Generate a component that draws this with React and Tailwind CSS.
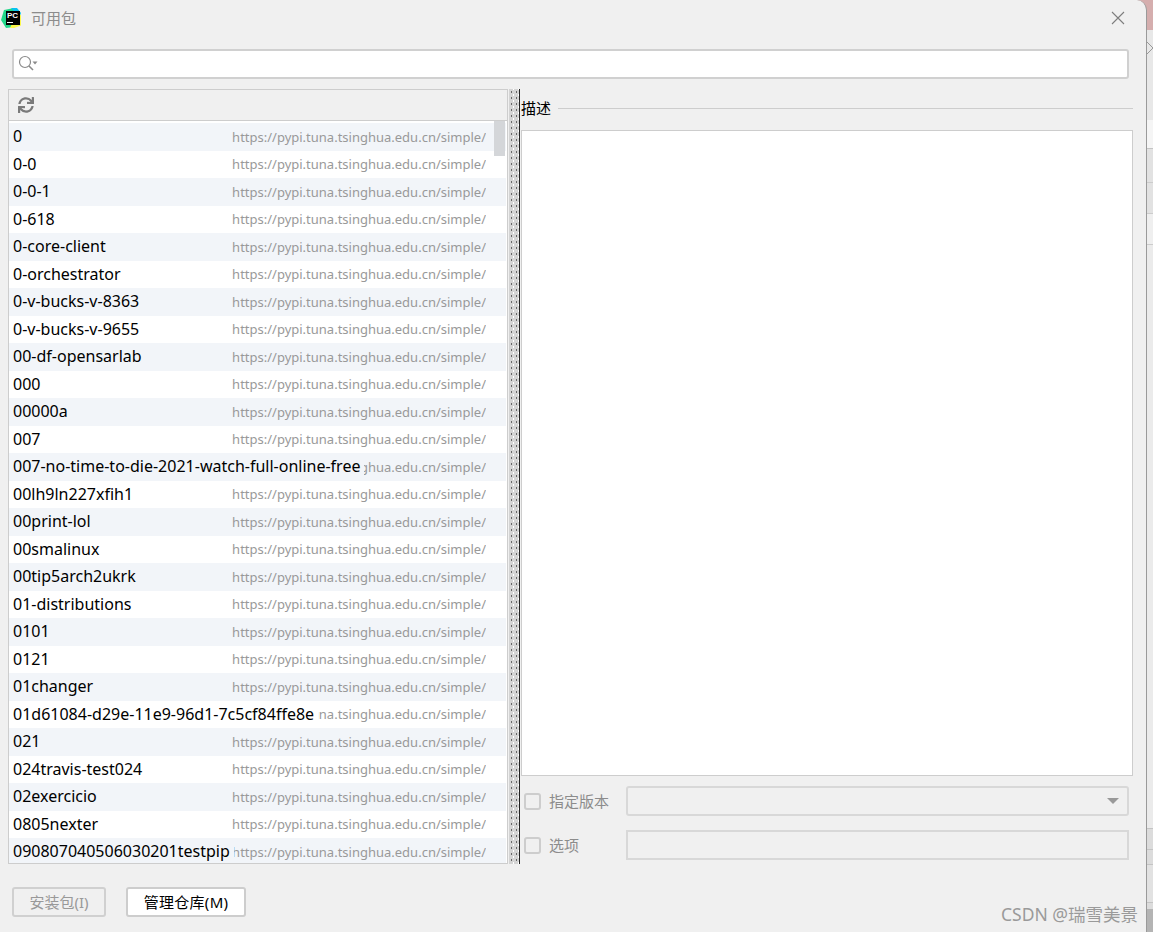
import { FaSync } from 'react-icons/fa';

const packages = [
  '0', '0-0', '0-0-1', '0-618', '0-core-client', '0-orchestrator', '0-v-bucks-v-8363', '0-v-bucks-v-9655',
  '00-df-opensarlab', '000', '00000a', '007', '007-no-time-to-die-2021-watch-full-online-free', '00lh9ln227xfih1',
  '00print-lol', '00smalinux', '00tip5arch2ukrk', '01-distributions', '0101', '0121', '01changer',
  '01d61084-d29e-11e9-96d1-7c5cf84ffe8e', '021', '024travis-test024', '02exercicio', '0805nexter',
  '090807040506030201testpip',
];

const REPO = 'https://pypi.tuna.tsinghua.edu.cn/simple/';

function PyCharmLogo() {
  return (
    <div className="relative w-5 h-5 shrink-0">
      <svg width="20" height="20" viewBox="0 0 20 20">
        <polygon points="3,2 13,0 19,4 20,15 14,19 5,20 0,12" fill="#21d789" />
        <polygon points="10,0 16,0 20,5 18,9" fill="#07c3f2" />
        <polygon points="14,9 20,7 21,17 13,20 9,20" fill="#fcf84a" />
        <rect x="5" y="3" width="14" height="14" fill="#000" />
        <rect x="6" y="14" width="6" height="1" fill="#fff" />
      </svg>
      <span className="absolute left-[6px] top-[3px] text-[8px] leading-[10px] font-bold text-white font-['Liberation_Sans',sans-serif]">PC</span>
    </div>
  );
}

function Row({ name, index }) {
  const stripe = index % 2 === 0 ? 'bg-[#f2f5f9]' : 'bg-white';
  return (
    <div className={`flex items-center h-[27.5px] pl-[4px] pr-[20px] mr-[1px] ${stripe}`}>
      <span className={`shrink-0 pr-[4px] text-[16px] leading-[24px] -mt-[1px] text-black ${stripe}`}>{name}</span>
      <div className="flex-1 min-w-0 mt-[1px] flex justify-end overflow-hidden">
        <span className="shrink-0 text-[13px] text-[#999999]">{REPO}</span>
      </div>
    </div>
  );
}

function Splitter() {
  return (
    <div className="w-[11px] shrink-0 ml-[1px] mr-[1px] border-r border-[#222222] bg-[#d4d4d4] bg-[radial-gradient(circle,#666666_0.7px,transparent_1px),radial-gradient(circle,#ffffff_0.7px,transparent_1px)] bg-[length:5px_6px,5px_6px] bg-[position:0_0,2px_3px]" />
  );
}

// sliver of the window behind the dialog
function BackgroundWindow() {
  return (
    <div className="flex-1 flex flex-col">
      <div className="h-[30px] bg-[#d5aeae]" />
      <div className="relative h-[90px] bg-[#e8e8e8]">
        <svg className="absolute left-[0px] top-[11px]" width="6" height="14" viewBox="0 0 6 14" fill="none" stroke="#999999">
          <path d="M0 1 L6 7 L0 13" />
        </svg>
      </div>
      <div className="h-[29px] bg-[#f5f5f5] border-b border-[#c4c4c4]" />
      <div className="h-[34px] bg-[#e2e2e2] border-b border-[#cccccc]" />
      <div className="h-[31px] bg-[#e2e2e2] border-b border-[#cccccc]" />
      <div className="h-[31px] bg-[#efefef] border-b border-[#cccccc]" />
      <div className="h-[584px] bg-[#ebebeb] border-b border-[#c4c4c4]" />
      <div className="h-[21px] bg-[#dcdcdc] border-b border-[#c4c4c4]" />
      <div className="h-[15px] bg-[#dcdcdc] border-b border-[#c4c4c4]" />
      <div className="h-[38px] bg-[#e2e2e2] border-b border-[#c4c4c4]" />
      <div className="h-[6px] bg-[#dcdcdc]" />
      <div className="flex-1 bg-[#b4b4b4]" />
    </div>
  );
}

export default function App() {
  return (
    <div className="w-[1153px] h-[932px] overflow-hidden flex bg-[#d5aeae] font-['Noto_Sans','Noto_Sans_CJK_SC',sans-serif]">
      <div className="w-[1147px] h-full shrink-0 flex flex-col bg-[#f0f0f0] rounded-tr-[10px] border-r border-[#9a9a9a]">
        <div className="h-[36px] shrink-0 flex items-center pl-[1px] pr-[20px]">
          <PyCharmLogo />
          <span className="ml-[10px] text-[15px] text-[#8c8c8c]">可用包</span>
          <svg className="ml-auto" width="16" height="16" viewBox="0 0 16 16" fill="none" stroke="#7d7d7d" strokeWidth="1.1">
            <path d="M2 2 L14 14 M14 2 L2 14" />
          </svg>
        </div>

        <div className="h-[30px] mt-[13px] ml-[12px] mr-[17px] flex items-center pl-[4px] bg-white rounded-[3px] border-2 border-[#d0d0d0] shrink-0">
          <svg width="20" height="18" viewBox="0 0 20 18" fill="none" stroke="#8a8a8a" strokeWidth="1.2">
            <circle cx="7" cy="7" r="5.5" />
            <path d="M11 11 L15 15" strokeWidth="1.6" />
            <path d="M14.5 6.5 h5 l-2.5 3 z" fill="#8a8a8a" stroke="none" />
          </svg>
        </div>

        <div className="flex-1 min-h-0 flex mt-[10px] ml-[8px] mr-[13px]">
          <div className="relative w-[500px] shrink-0 flex flex-col border border-[#cdcdcd] overflow-hidden">
            <div className="h-[31px] shrink-0 flex items-center pl-[9px] border-b border-[#cdcdcd]">
              <FaSync size={16} color="#7a7a7a" />
            </div>
            <div className="flex-1 min-h-0 bg-white pt-[2px] overflow-hidden">
              {packages.map((name, index) => (
                <Row key={name} name={name} index={index} />
              ))}
            </div>
            <div className="absolute right-[2px] top-[31px] w-[11px] h-[35px] bg-[#d4d6d9]" />
          </div>

          <Splitter />

          <div className="flex-1 min-w-0 flex flex-col">
            <div className="h-[41px] shrink-0 flex items-center pb-[3px]">
              <span className="text-[15px] text-black">描述</span>
              <div className="flex-1 h-px ml-[7px] bg-[#cdcdcd]" />
            </div>
            <div className="h-[646px] shrink-0 bg-white border border-[#cdcdcd]" />
            <div className="flex items-center h-[30px] mt-[10px] pl-[3px] pr-[4px]">
              <div className="w-[17px] h-[17px] rounded-[3px] border-2 border-[#cdcdcd]" />
              <span className="w-[77px] ml-[8px] text-[15px] text-[#8c8c8c]">指定版本</span>
              <div className="flex-1 h-[30px] flex items-center justify-end pr-[8px] rounded-[3px] border-2 border-[#d8d8d8]">
                <div className="w-0 h-0 border-x-[6px] border-x-transparent border-t-[6px] border-t-[#999999]" />
              </div>
            </div>
            <div className="flex items-center h-[30px] mt-[14px] pl-[3px] pr-[4px]">
              <div className="w-[17px] h-[17px] rounded-[3px] border-2 border-[#cdcdcd]" />
              <span className="w-[77px] ml-[8px] text-[15px] text-[#8c8c8c]">选项</span>
              <div className="flex-1 h-[30px] border-2 border-[#d8d8d8]" />
            </div>
          </div>
        </div>

        <div className="h-[68px] shrink-0 flex items-start relative pt-[23px] pl-[12px] gap-[20px]">
          <div className="w-[94px] h-[30px] flex items-center justify-center rounded-[3px] border-2 border-[#d0d0d0] text-[15px] text-[#999999]">安装包(I)</div>
          <div className="w-[120px] h-[30px] flex items-center justify-center rounded-[3px] border-2 border-[#cdcdcd] bg-white text-[15px] tracking-[0.3px] text-black">管理仓库(M)</div>
          <span className="absolute right-[8px] top-[37px] text-[17.5px] text-[#9a9a9a]">CSDN @瑞雪美景</span>
        </div>
      </div>

      <BackgroundWindow />
    </div>
  );
}
